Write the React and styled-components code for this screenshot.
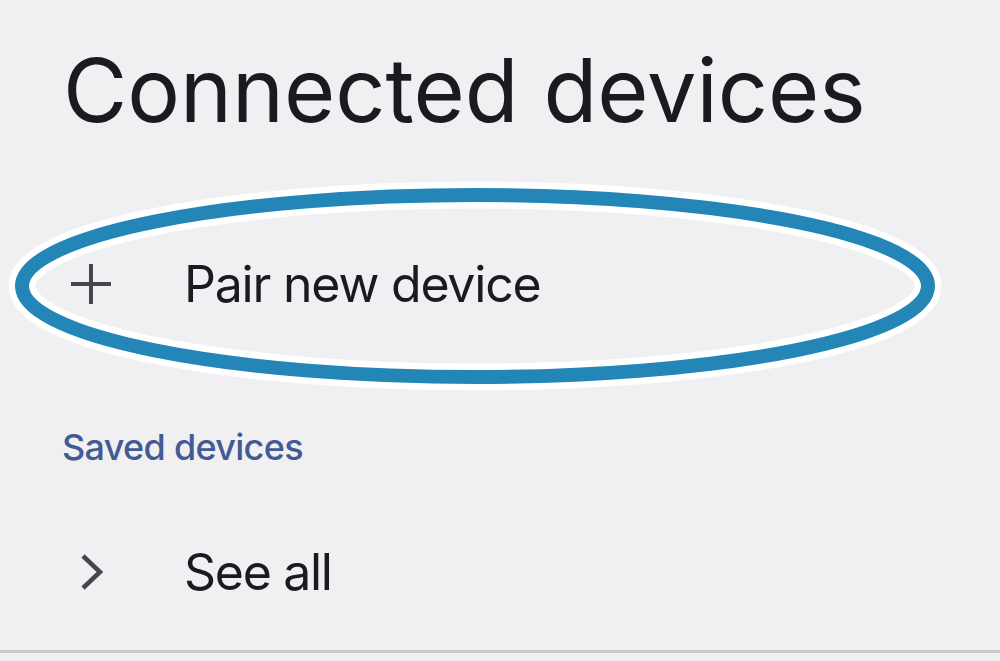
import styled, { createGlobalStyle } from 'styled-components';

const GlobalStyle = createGlobalStyle`
  html, body {
    margin: 0;
    padding: 0;
    background: #f0f0f2;
  }
  body {
    font-family: Inter, "Noto Sans", sans-serif;
    color: #1b1b1f;
  }
`;

const Page = styled.div`
  position: relative;
  width: 1000px;
  height: 661px;
  overflow: hidden;
  background: #f0f0f2;
  display: flex;
  flex-direction: column;
  & > * {
    flex-shrink: 0;
  }
`;

const Title = styled.h1`
  margin: 0;
  padding: 40px 0 0 63px;
  font-size: 88px;
  font-weight: 400;
  line-height: 100px;
  letter-spacing: 0;
  color: #1b1b1f;
`;

const Row = styled.div`
  display: flex;
  align-items: center;
  height: ${p => p.h}px;
  margin-top: ${p => p.top}px;
  padding-left: 70px;
  gap: 72px;
`;

const IconBox = styled.div`
  width: 42px;
  height: 42px;
  flex-shrink: 0;
  display: flex;
  align-items: center;
  justify-content: center;
  color: #44474e;
`;

const Label = styled.span`
  font-size: 50px;
  font-weight: 400;
  letter-spacing: ${p => p.ls}px;
  color: #1b1b1f;
`;

const Section = styled.div`
  margin-top: 73px;
  padding-left: 62px;
  font-size: 36px;
  font-weight: 500;
  letter-spacing: -0.7px;
  color: #435a94;
  height: 60px;
  line-height: 60px;
`;

const Spacer = styled.div`
  flex: 1 1 auto;
`;

const Divider = styled.div`
  height: 3px;
  background: #c8c8ca;
  margin-bottom: 8px;
`;

const Ring = styled.svg`
  position: absolute;
  left: 0;
  top: 0;
  pointer-events: none;
`;

export default function App() {
  return (
    <Page>
      <GlobalStyle />
      <Title>Connected devices</Title>
      <Row h={120} top={84}>
        <IconBox>
          <svg width="42" height="42" viewBox="0 0 42 42">
            <path d="M21 1v40M1 21h40" stroke="currentColor" strokeWidth="4" fill="none" />
          </svg>
        </IconBox>
        <Label ls={-1.2}>Pair new device</Label>
      </Row>
      <Section>Saved devices</Section>
      <Row h={110} top={40}>
        <IconBox>
          <svg width="42" height="42" viewBox="0 0 42 42">
            <path d="M13 5l17 16-17 16" stroke="currentColor" strokeWidth="4.5" fill="none" />
          </svg>
        </IconBox>
        <Label ls={-1.3}>See all</Label>
      </Row>
      <Spacer />
      <Divider />
      <Ring width="1000" height="661" viewBox="0 0 1000 661">
        <ellipse cx="475" cy="286" rx="453" ry="91" fill="none" stroke="#ffffff" strokeWidth="27" />
        <ellipse cx="475" cy="286" rx="453" ry="91" fill="none" stroke="#2386b6" strokeWidth="14" />
      </Ring>
    </Page>
  );
}
